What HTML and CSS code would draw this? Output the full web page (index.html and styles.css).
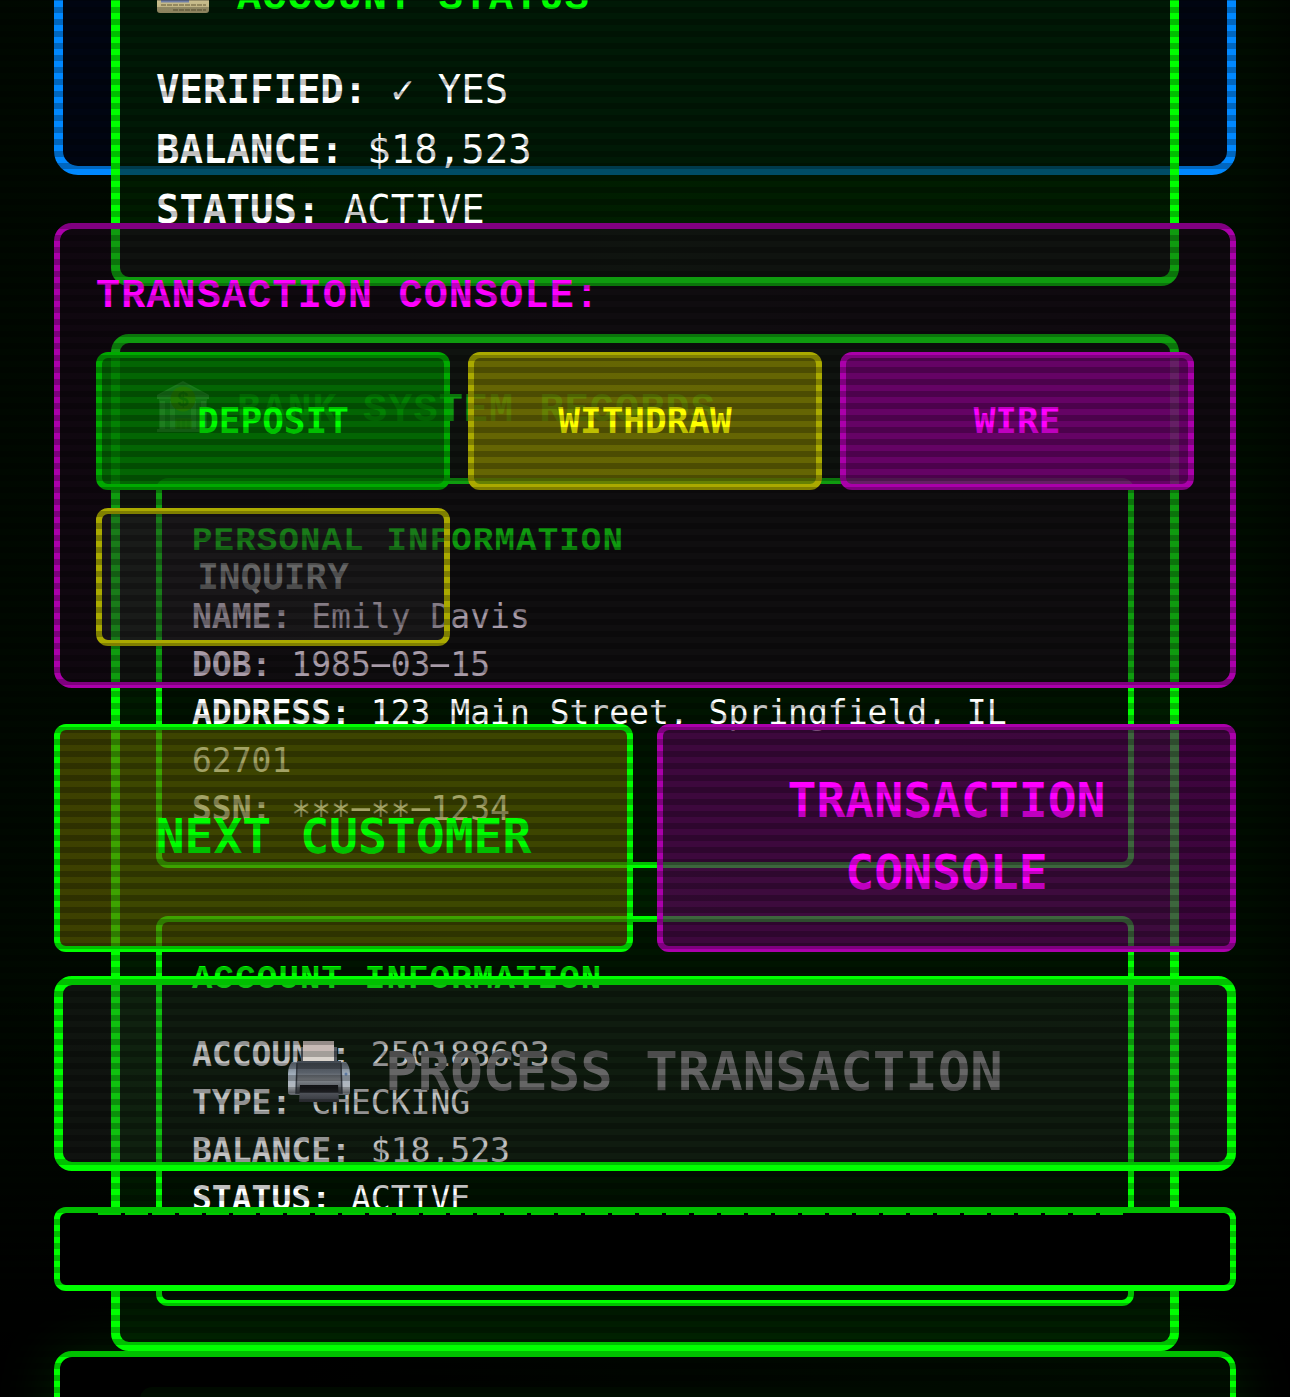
FILE: index.html
```html
<!DOCTYPE html>
<html lang="en">
<head>
<meta charset="utf-8">
<title>Teller Terminal</title>
<link rel="stylesheet" href="styles.css">
</head>
<body>
<main class="terminal">
  <div class="layer layer-window">
    <div class="window"></div>
  </div>

  <div class="layer layer-records">
    <section class="card card-status">
      <h2 class="title">
        <svg class="icon" viewBox="0 0 54 52"><defs><linearGradient id="gold" x2="0" y2="1"><stop offset="0" stop-color="#e9dfb0"/><stop offset="1" stop-color="#b9ad7c"/></linearGradient></defs><rect x="1" y="9" width="52" height="37" rx="3" fill="url(#gold)"/><path d="M5 34h28" stroke="#7180a8" stroke-width="3"/><path d="M5 38h45M17 43h33" stroke="#94895f" stroke-width="2" stroke-dasharray="5 1"/></svg>ACCOUNT STATUS</h2>
      <p class="line"><b>VERIFIED:</b> ✓ YES</p>
      <p class="line"><b>BALANCE:</b> $18,523</p>
      <p class="line"><b>STATUS:</b> ACTIVE</p>
    </section>
    <section class="card card-bank">
      <h2 class="title">
        <svg class="icon" viewBox="0 0 54 52"><path d="M1 15 27 1l26 14v4H1z" fill="#c9cdd2"/><path d="M3 15 27 3l24 12z" fill="#9aa0a8"/><path d="M3 19h48v32H3z" fill="#7d838c"/><path d="M4 21h5v29H4zM14 21h5v29h-5zM35 21h5v29h-5zM45 21h5v29h-5z" fill="#e3e6ea"/><path d="M20 39h15v12H20z" fill="#8d7a3a"/><path d="M20 39h15v12M25 39v12M30 39v12M20 39v12" stroke="#d5b33c" fill="none"/><path d="M1 49h52v3H1z" fill="#b9bdc3"/><circle cx="27" cy="19" r="12.5" fill="#f5b400"/><text class="coin" x="27" y="26">$</text></svg>BANK SYSTEM RECORDS</h2>
      <div class="record">
        <h3 class="subtitle">PERSONAL INFORMATION</h3>
        <p><b>NAME:</b> Emily Davis</p>
        <p><b>DOB:</b> 1985<span class="dash">-</span>03<span class="dash">-</span>15</p>
        <p><b>ADDRESS:</b> 123 Main Street, Springfield, IL 62701</p>
        <p><b>SSN:</b> <span class="mask">***</span><span class="dash">-</span><span class="mask">**</span><span class="dash">-</span>1234</p>
      </div>
      <div class="record">
        <h3 class="subtitle">ACCOUNT INFORMATION</h3>
        <p><b>ACCOUNT:</b> 250188693</p>
        <p><b>TYPE:</b> CHECKING</p>
        <p><b>BALANCE:</b> $18,523</p>
        <p><b>STATUS:</b> ACTIVE</p>
      </div>
    </section>
  </div>

  <div class="layer layer-controls">
    <section class="console">
      <h2 class="title">TRANSACTION CONSOLE:</h2>
      <div class="keys">
        <button class="key green">DEPOSIT</button>
        <button class="key yellow">WITHDRAW</button>
        <button class="key magenta">WIRE</button>
        <button class="key muted">INQUIRY</button>
      </div>
    </section>
    <div class="actions">
      <button class="action next">NEXT CUSTOMER</button>
      <button class="action transact">TRANSACTION CONSOLE</button>
    </div>
    <button class="process">
      <svg class="printer" viewBox="0 0 64 64"><defs>
        <linearGradient id="body" x2="0" y2="1"><stop offset="0" stop-color="#414850"/><stop offset=".35" stop-color="#596069"/><stop offset=".55" stop-color="#858a90"/><stop offset="1" stop-color="#34383d"/></linearGradient>
        <linearGradient id="side" x2="0" y2="1"><stop offset="0" stop-color="#66717d"/><stop offset=".4" stop-color="#a5b2bf"/><stop offset=".8" stop-color="#b4b9bf"/><stop offset="1" stop-color="#565a5f"/></linearGradient>
        <linearGradient id="tray" x2="0" y2="1"><stop offset="0" stop-color="#101113"/><stop offset=".4" stop-color="#25272b"/><stop offset=".5" stop-color="#4d5057"/><stop offset="1" stop-color="#33353b"/></linearGradient></defs>
        <path d="M14 7h36v16H14z" fill="#555a60"/><path d="M16 1h31v22H16z" fill="#d9d3cc"/><path d="M16 1h31v10H16z" fill="#c7b9b5"/>
        <path d="M5 22h54q4 4 4 12v18q0 3-3 3H4q-3 0-3-3V34q0-8 4-12z" fill="url(#side)"/>
        <path d="M10 21h44l1 15v18H9V36z" fill="url(#body)"/><path d="M10 23 9 54M54 23l1 31" stroke="#353b42" stroke-width="1.5"/>
        <path d="M13 45h38l1 17H12z" fill="url(#tray)"/><circle cx="59" cy="34" r="1.5" fill="#5b78a2"/></svg><span class="process-label">PROCESS TRANSACTION</span>
    </button>
    <div class="printout"><div class="tear"></div></div>
    <div class="receipt"><div class="receipt-body"></div></div>
  </div>
</main>
</body>
</html>
```
FILE: styles.css
```css
* { box-sizing: border-box; }
body { margin: 0; background: #000; }
h2, h3, p { margin: 0; }
button { margin: 0; padding: 0; font: inherit; background: none; }

.terminal {
  position: relative;
  display: grid;
  width: 1290px;
  height: 1397px;
  overflow: hidden;
  color: #fff;
  font-family: "DejaVu Sans Mono", monospace;
  background:
    linear-gradient(transparent 70%, #000 97%),
    linear-gradient(90deg, #000800, #001200 50%, #000c00 97%, #000700);
}
.terminal::after {
  content: "";
  position: absolute;
  z-index: 4;
  inset: 0;
  background: repeating-linear-gradient(transparent 0 6px, rgba(0, 0, 0, .25) 6px 12px) 0 1px / 100% 12px;
  pointer-events: none;
}
.layer {
  grid-area: 1 / 1;
  display: flex;
  flex-direction: column;
  height: 1397px;
  min-width: 0;
}

.layer-window { z-index: 1; padding: 0 54px; }
.window {
  height: 175px;
  border: 9px solid #08f;
  border-top: 0;
  border-radius: 0 0 24px 24px;
  background: #000511;
}

.layer-records { z-index: 2; padding: 0 111px; gap: 48px; }
.card {
  flex: none;
  padding: 36px;
  border: 9px solid #0f0;
  border-radius: 18px;
  background: rgba(0, 38, 0, .6);
}
.card-status {
  height: 362px;
  margin-top: -76px;
  padding-top: 34px;
}
.card-bank { height: 1017px; }
.title {
  height: 63px;
  font: bold 40px/63px "Courier", "Liberation Mono", monospace;
  letter-spacing: 1.2px;
  color: #0f0;
  white-space: nowrap;
}
.card .title { display: flex; align-items: center; }
.icon { width: 54px; height: 52px; margin: 0 27px 10px 0; flex: none; }
.card-status .icon { margin-bottom: 11px; }
.coin { font: bold 20px "Liberation Sans", sans-serif; letter-spacing: 0; text-anchor: middle; fill: #6b5108; }
.card-status .title { margin-bottom: 30px; }
.card-bank .title { margin-bottom: 36px; }
.line { font-size: 39px; line-height: 60px; }

.record {
  height: 390px;
  padding: 30px;
  border: 6px solid #0f0;
  border-radius: 12px;
  background: rgba(0, 0, 0, .3);
  font-size: 33px;
  line-height: 48px;
}
.record + .record { margin-top: 48px; }
.subtitle {
  margin-bottom: 25px;
  font: bold 34px/54px "Courier", "Liberation Mono", monospace;
  letter-spacing: 1.2px;
  color: #0f0;
}
.mask { display: inline-block; transform: translateY(6px) scale(1, 1.15); }
.dash { display: inline-block; transform: translateY(-1px) scaleX(2.2); }

.layer-controls { z-index: 3; padding: 223px 54px 0; }
.console {
  height: 465px;
  flex: none;
  padding: 36px;
  border: 6px solid #a0a;
  border-radius: 18px;
  background: rgba(38, 4, 38, .4);
}
.console .title { margin-bottom: 24px; color: #f0f; }
.keys {
  display: grid;
  grid-template-columns: repeat(3, 1fr);
  grid-auto-rows: 138px;
  gap: 18px;
}
.key {
  padding-bottom: 2px;
  border: 6px solid;
  border-radius: 12px;
  font-size: 36px;
  font-weight: bold;
}
.green { color: #0f0; border-color: #0a0; background: rgba(0, 122, 0, .8); }
.yellow { color: #ff0; border-color: #aa0; background: rgba(122, 122, 0, .8); }
.magenta { color: #f0f; border-color: #a0a; background: rgba(122, 0, 122, .8); }
.muted { color: #666; border-color: #aa0; background: rgba(51, 51, 51, .3); }

.actions {
  display: grid;
  flex: none;
  grid-template-columns: 1fr 1fr;
  grid-auto-rows: 228px;
  gap: 24px;
  margin-top: 36px;
}
.action {
  padding: 0 30px 5px;
  border: 6px solid;
  border-radius: 12px;
  font-size: 48px;
  font-weight: bold;
  line-height: 72px;
}
.next { color: #0f0; border-color: #0f0; background: rgba(102, 102, 0, .6); }
.transact { color: #f0f; border-color: #a0a; background: rgba(102, 0, 102, .6); }

.process {
  display: flex;
  flex: none;
  align-items: center;
  justify-content: center;
  gap: 34px;
  height: 195px;
  margin-top: 24px;
  padding-bottom: 3px;
  border: 9px solid #0f0;
  border-radius: 18px;
  background: rgba(51, 51, 51, .3);
  color: #666;
  font-size: 54px;
  font-weight: bold;
}
.printer { width: 64px; height: 64px; }
.process-label { padding-bottom: 1px; }

.printout {
  flex: none;
  height: 84px;
  margin-top: 36px;
  padding: 0 38px;
  border: 6px solid #0f0;
  border-radius: 12px;
  background: #000;
}
.tear {
  width: 1026px;
  height: 2px;
  background: repeating-linear-gradient(90deg, #00c800 0 23px, transparent 23px 27.07px);
}
.receipt {
  flex: none;
  height: 300px;
  margin-top: 60px;
  padding: 30px 80px;
  border: 6px solid #0f0;
  border-radius: 18px;
  background: linear-gradient(100deg, #000 20%, #000f00);
  box-shadow: 0 0 60px rgba(0, 255, 0, .14);
}
.receipt-body { height: 200px; border-radius: 12px; background: #000d00; }
```
